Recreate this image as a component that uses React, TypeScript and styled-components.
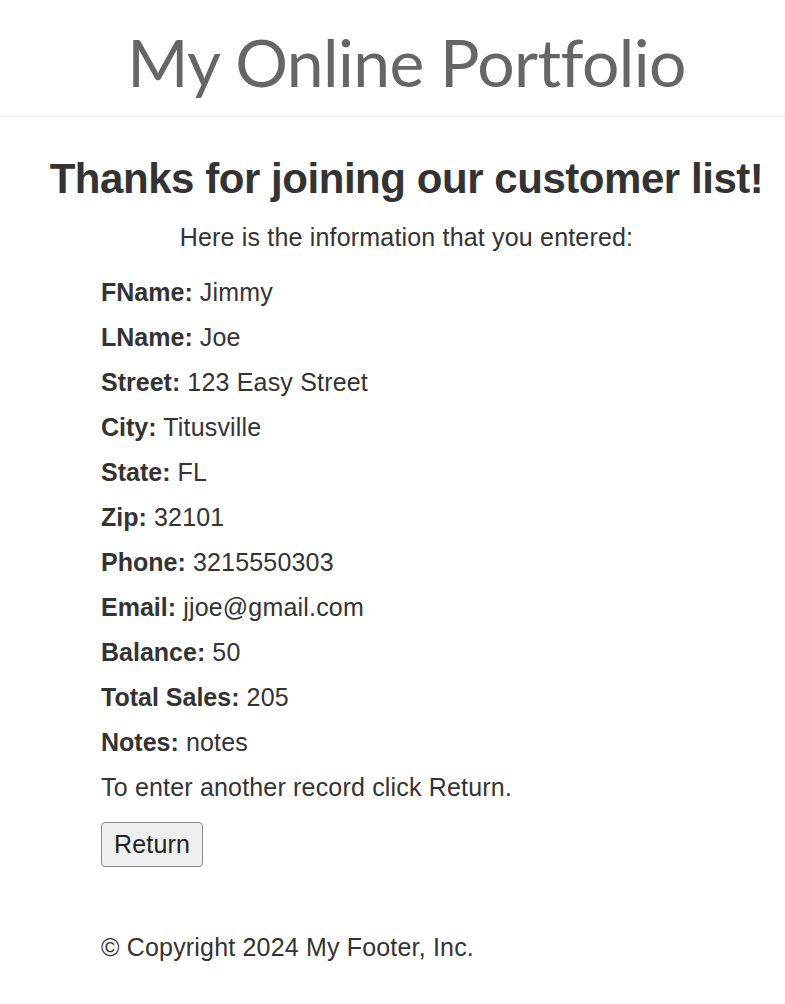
import React from "react";
import styled, { createGlobalStyle } from "styled-components";

const Global = createGlobalStyle`
  html, body { margin: 0; padding: 0; background: #fff; }
  body {
    font-family: "Liberation Sans", Arial, Helvetica, sans-serif;
    color: #333;
    font-size: 25px;
    letter-spacing: 0.18px;
  }
`;

const Header = styled.header`
  box-sizing: border-box;
  height: 117px;
  border-bottom: 1px solid #eee;
  padding: 22px 0 0 28px;
  text-align: center;
`;

const SiteTitle = styled.div`
  font-family: "Trebuchet MS", Lato, "Open Sans", sans-serif;
  font-size: 66px;
  line-height: 80px;
  letter-spacing: -0.6px;
  color: #666;
`;

const Main = styled.main`
  padding: 0 0 0 28px;
`;

const Heading = styled.h1`
  margin: 0;
  padding-top: 37px;
  font-size: 42px;
  line-height: 50px;
  letter-spacing: -0.45px;
  font-weight: bold;
  text-align: center;
  color: #333;
`;

const Intro = styled.p`
  margin: 11px 0 10px;
  text-align: center;
  line-height: 45px;
`;

const Details = styled.div`
  padding-left: 73px;
`;

const Row = styled.div`
  line-height: 45px;
`;

const Label = styled.b`
  font-weight: bold;
  letter-spacing: 0;
`;

const Button = styled.button`
  display: block;
  box-sizing: border-box;
  margin-top: 12px;
  font-family: "Liberation Sans", Arial, sans-serif;
  font-size: 25px;
  letter-spacing: 0.18px;
  color: #222;
  background: #efefef;
  border: 1px solid #8a8a8a;
  border-radius: 4px;
  padding: 0;
  width: 102px;
  height: 45px;
`;

const Footer = styled.footer`
  padding: 58px 0 40px 73px;
  line-height: 45px;
`;

const fields: [string, string][] = [
  ["FName", "Jimmy"],
  ["LName", "Joe"],
  ["Street", "123 Easy Street"],
  ["City", "Titusville"],
  ["State", "FL"],
  ["Zip", "32101"],
  ["Phone", "3215550303"],
  ["Email", "jjoe@gmail.com"],
  ["Balance", "50"],
  ["Total Sales", "205"],
  ["Notes", "notes"],
];

export default function App() {
  return (
    <>
      <Global />
      <Header>
        <SiteTitle>My Online Portfolio</SiteTitle>
      </Header>
      <Main>
        <Heading>Thanks for joining our customer list!</Heading>
        <Intro>Here is the information that you entered:</Intro>
        <Details>
          {fields.map(([k, v]) => (
            <Row key={k}>
              <Label>{k}:</Label> {v}
            </Row>
          ))}
          <Row>To enter another record click Return.</Row>
          <Button>Return</Button>
        </Details>
        <Footer>© Copyright 2024 My Footer, Inc.</Footer>
      </Main>
    </>
  );
}
